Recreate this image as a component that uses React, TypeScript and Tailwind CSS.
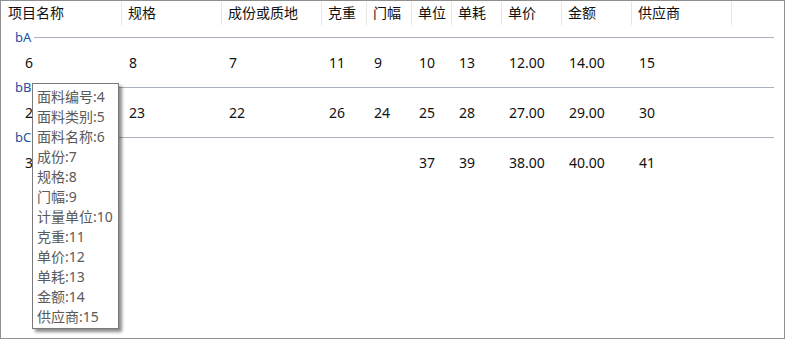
import React from "react";

const FONT = { fontFamily: '"Noto Sans", "Noto Sans CJK SC", sans-serif' };

const COLUMNS = [
  { title: "项目名称", width: "w-[121px]", pad: "pl-[7px]" },
  { title: "规格", width: "w-[100px]", pad: "pl-[6px]" },
  { title: "成份或质地", width: "w-[100px]", pad: "pl-[6px]" },
  { title: "克重", width: "w-[45px]", pad: "pl-[6px]" },
  { title: "门幅", width: "w-[45px]", pad: "pl-[6px]" },
  { title: "单位", width: "w-[40px]", pad: "pl-[6px]" },
  { title: "单耗", width: "w-[50px]", pad: "pl-[6px]" },
  { title: "单价", width: "w-[60px]", pad: "pl-[6px]" },
  { title: "金额", width: "w-[70px]", pad: "pl-[6px]" },
  { title: "供应商", width: "w-[100px]", pad: "pl-[6px]" },
];

const GROUPS = [
  { label: "bA", row: ["6", "8", "7", "11", "9", "10", "13", "12.00", "14.00", "15"] },
  { label: "bB", row: ["21", "23", "22", "26", "24", "25", "28", "27.00", "29.00", "30"] },
  { label: "bC", row: ["36", "", "", "", "", "37", "39", "38.00", "40.00", "41"] },
];

const TIP = [
  "面料编号:4",
  "面料类别:5",
  "面料名称:6",
  "成份:7",
  "规格:8",
  "门幅:9",
  "计量单位:10",
  "克重:11",
  "单价:12",
  "单耗:13",
  "金额:14",
  "供应商:15",
];

function HeaderRow() {
  return (
    <div className="flex h-[24px] text-[14px] text-[#111]">
      {COLUMNS.map((c) => (
        <div
          key={c.title}
          className={`${c.width} ${c.pad} mt-[1px] h-[23px] shrink-0 border-r border-[#e6e6e6] leading-[22px] whitespace-nowrap`}
        >
          {c.title}
        </div>
      ))}
    </div>
  );
}

function Group({ label, row }: { label: string; row: string[] }) {
  return (
    <div>
      <div className="flex h-[24px] items-center pl-[14px] pr-[10px]">
        <span className="text-[13px] leading-none text-[#2351a0]">{label}</span>
        <div className="ml-[3px] h-px flex-1 bg-[#aab2c2]" />
      </div>
      <div className="flex h-[26px] items-center text-[14px] text-[#111]">
        {row.map((v, i) => (
          <div
            key={i}
            className={`${COLUMNS[i].width} ${i === 0 ? "pl-[24px]" : "pl-[7px]"} shrink-0 whitespace-nowrap`}
          >
            {v}
          </div>
        ))}
      </div>
    </div>
  );
}

export default function App() {
  return (
    <div
      className="relative h-[339px] w-[785px] overflow-hidden border border-[#8f8f8f] bg-white"
      style={FONT}
    >
      <HeaderRow />
      {GROUPS.map((g) => (
        <Group key={g.label} label={g.label} row={g.row} />
      ))}

      {/* hover tooltip over the first column */}
      <div className="absolute left-[31px] top-[82px] w-[87px] border border-[#7a7a7a] bg-white pb-[1px] pl-[4px] pt-[3px] shadow-[3px_3px_3px_rgba(0,0,0,0.45)]">
        {TIP.map((t) => (
          <div key={t} className="h-[20px] whitespace-nowrap text-[14px] leading-[20px] text-[#5a5a5a]">
            {t}
          </div>
        ))}
      </div>
    </div>
  );
}
